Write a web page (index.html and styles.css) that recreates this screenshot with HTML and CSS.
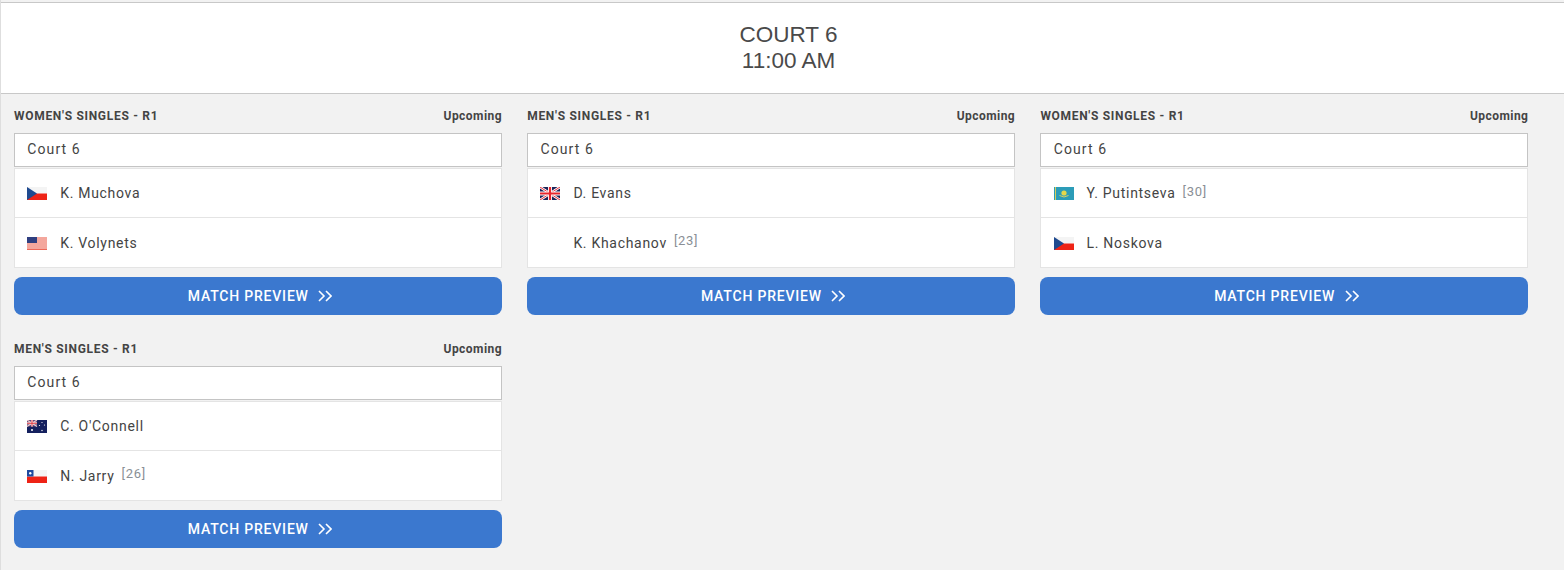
FILE: index.html
```html
<!DOCTYPE html>
<html lang="en">
<head>
    <meta charset="UTF-8">
    <meta name="viewport" content="width=device-width, initial-scale=1.0">
    <title>Court 6</title>
    <link rel="stylesheet" href="styles.css">
</head>
<body>
    <header class="court-header">
        <div>COURT 6</div>
        <div>11:00 AM</div>
    </header>

    <div class="matches">
        <div class="match">
            <div class="match-top"><span class="round">WOMEN'S SINGLES - R1</span><span class="status">Upcoming</span></div>
            <div class="court-name">Court 6</div>
            <div class="players">
                <div class="player">
                    <svg class="flag" viewBox="0 0 20 13"><rect width="20" height="6.5" fill="#f4f4f4"/><rect y="6.5" width="20" height="6.5" fill="#ee2316"/><path d="M0 0L10 6.5L0 13Z" fill="#1f4a8f"/></svg>
                    <span class="name">K. Muchova</span>
                </div>
                <div class="player">
                    <svg class="flag" viewBox="0 0 20 13"><rect width="20" height="13" fill="#fbf4f2"/><path d="M0 1H20M0 3H20M0 5H20M0 7H20M0 9H20M0 11H20M0 12.6H20" stroke="#ec5a48" stroke-width="1"/><rect width="10" height="6" fill="#2f3f80"/></svg>
                    <span class="name">K. Volynets</span>
                </div>
            </div>
            <a class="preview-btn">MATCH PREVIEW
                <svg class="chevrons" viewBox="0 0 14 12"><path d="M1 1L6 6L1 11M8 1L13 6L8 11" fill="none" stroke="#fff" stroke-width="1.6"/></svg>
            </a>
        </div>

        <div class="match">
            <div class="match-top"><span class="round">MEN'S SINGLES - R1</span><span class="status">Upcoming</span></div>
            <div class="court-name">Court 6</div>
            <div class="players">
                <div class="player">
                    <svg class="flag" viewBox="0 0 20 13"><rect width="20" height="13" fill="#1b2559"/><path d="M0 0L20 13M20 0L0 13" stroke="#fff" stroke-width="2.6"/><path d="M0 0L20 13M20 0L0 13" stroke="#e8303a" stroke-width="1"/><path d="M10 0V13M0 6.5H20" stroke="#fff" stroke-width="4"/><path d="M10 0V13M0 6.5H20" stroke="#e8262c" stroke-width="2.2"/></svg>
                    <span class="name">D. Evans</span>
                </div>
                <div class="player">
                    <span class="flag"></span>
                    <span class="name">K. Khachanov</span><span class="seed">[23]</span>
                </div>
            </div>
            <a class="preview-btn">MATCH PREVIEW
                <svg class="chevrons" viewBox="0 0 14 12"><path d="M1 1L6 6L1 11M8 1L13 6L8 11" fill="none" stroke="#fff" stroke-width="1.6"/></svg>
            </a>
        </div>

        <div class="match">
            <div class="match-top"><span class="round">WOMEN'S SINGLES - R1</span><span class="status">Upcoming</span></div>
            <div class="court-name">Court 6</div>
            <div class="players">
                <div class="player">
                    <svg class="flag" viewBox="0 0 20 13"><rect width="20" height="13" fill="#2c9cb8"/><rect x="1" width="1" height="13" fill="#d8cf5a"/><circle cx="10" cy="6" r="2.6" fill="#e6d84a"/><path d="M5.5 8.5Q10 11.5 14.5 8.5" fill="none" stroke="#d6d060" stroke-width="1"/></svg>
                    <span class="name">Y. Putintseva</span><span class="seed">[30]</span>
                </div>
                <div class="player">
                    <svg class="flag" viewBox="0 0 20 13"><rect width="20" height="6.5" fill="#f4f4f4"/><rect y="6.5" width="20" height="6.5" fill="#ee2316"/><path d="M0 0L10 6.5L0 13Z" fill="#1f4a8f"/></svg>
                    <span class="name">L. Noskova</span>
                </div>
            </div>
            <a class="preview-btn">MATCH PREVIEW
                <svg class="chevrons" viewBox="0 0 14 12"><path d="M1 1L6 6L1 11M8 1L13 6L8 11" fill="none" stroke="#fff" stroke-width="1.6"/></svg>
            </a>
        </div>

        <div class="match">
            <div class="match-top"><span class="round">MEN'S SINGLES - R1</span><span class="status">Upcoming</span></div>
            <div class="court-name">Court 6</div>
            <div class="players">
                <div class="player">
                    <svg class="flag" viewBox="0 0 20 13"><rect width="20" height="13" fill="#14205e"/><rect width="10" height="6.5" fill="#5a4a80"/><path d="M0 0L10 6.5M10 0L0 6.5" stroke="#f0c8c8" stroke-width="1.2"/><path d="M5 0V6.5M0 3.25H10" stroke="#f4f4f4" stroke-width="2"/><path d="M5 0V6.5M0 3.25H10" stroke="#e0303a" stroke-width="1"/><g fill="#fff"><circle cx="5" cy="10" r="1"/><circle cx="15" cy="2.5" r=".6"/><circle cx="12.5" cy="5.5" r=".6"/><circle cx="17.5" cy="5" r=".6"/><circle cx="15" cy="10.5" r=".7"/></g></svg>
                    <span class="name">C. O'Connell</span>
                </div>
                <div class="player">
                    <svg class="flag" viewBox="0 0 20 13"><rect width="20" height="6.5" fill="#f4f4f4"/><rect y="6.5" width="20" height="6.5" fill="#ee2316"/><rect width="6.5" height="6.5" fill="#1f4a9f"/><circle cx="3.25" cy="3.25" r="1.2" fill="#fff"/></svg>
                    <span class="name">N. Jarry</span><span class="seed">[26]</span>
                </div>
            </div>
            <a class="preview-btn">MATCH PREVIEW
                <svg class="chevrons" viewBox="0 0 14 12"><path d="M1 1L6 6L1 11M8 1L13 6L8 11" fill="none" stroke="#fff" stroke-width="1.6"/></svg>
            </a>
        </div>
    </div>
</body>
</html>
```

FILE: styles.css
```css
body {
    font-family: 'Roboto', sans-serif;
    background-color: #f2f2f2;
    color: #444;
    margin: 0;
    padding: 2px 0 0 0;
    border-left: 1px solid #dedede;
    min-height: 568px;
}

.court-header {
    background-color: white;
    border-top: 1px solid #c8c8c8;
    border-bottom: 1px solid #c8c8c8;
    height: 90px;
    padding-left: 12px;
    display: flex;
    flex-direction: column;
    justify-content: center;
    align-items: center;
    font-family: 'Liberation Sans', Arial, sans-serif;
    font-size: 22.5px;
    line-height: 26px;
    color: #4a4a4a;
}

.matches {
    display: flex;
    flex-wrap: wrap;
    gap: 25px 25.2px;
    padding: 13px 0 0 13px;
}

.match {
    width: 488px;
}

.match-top {
    display: flex;
    justify-content: space-between;
    align-items: center;
    height: 18px;
    margin-bottom: 8px;
    font-size: 12px;
    font-weight: 700;
    color: #444;
}

.round {
    letter-spacing: 0.7px;
}

.status {
    letter-spacing: 0.45px;
}

.court-name {
    background: white;
    border: 1px solid #c4c4c4;
    height: 32px;
    line-height: 31px;
    padding-left: 12.3px;
    font-size: 14px;
    letter-spacing: 1.1px;
}

.players {
    background: white;
    border: 1px solid #e4e4e4;
    margin-top: 1px;
}

.player {
    display: flex;
    align-items: center;
    height: 48px;
    padding-left: 12.2px;
    font-size: 14px;
    letter-spacing: 0.7px;
}

.player + .player {
    height: 49px;
    border-top: 1px solid #e4e4e4;
}

.flag {
    width: 20px;
    height: 13px;
    margin-top: 1px;
    margin-right: 13px;
    flex: none;
}

.seed {
    font-size: 13px;
    color: #8a8f96;
    margin-left: 7px;
    margin-bottom: 4px;
}

.preview-btn {
    display: flex;
    justify-content: center;
    align-items: center;
    height: 38px;
    margin-top: 9px;
    padding-left: 4px;
    background-color: #3b78cf;
    border-radius: 8px;
    color: white;
    font-size: 14px;
    font-weight: 500;
    letter-spacing: 0.8px;
}

.chevrons {
    width: 14px;
    height: 12px;
    margin-left: 9.5px;
}
```
